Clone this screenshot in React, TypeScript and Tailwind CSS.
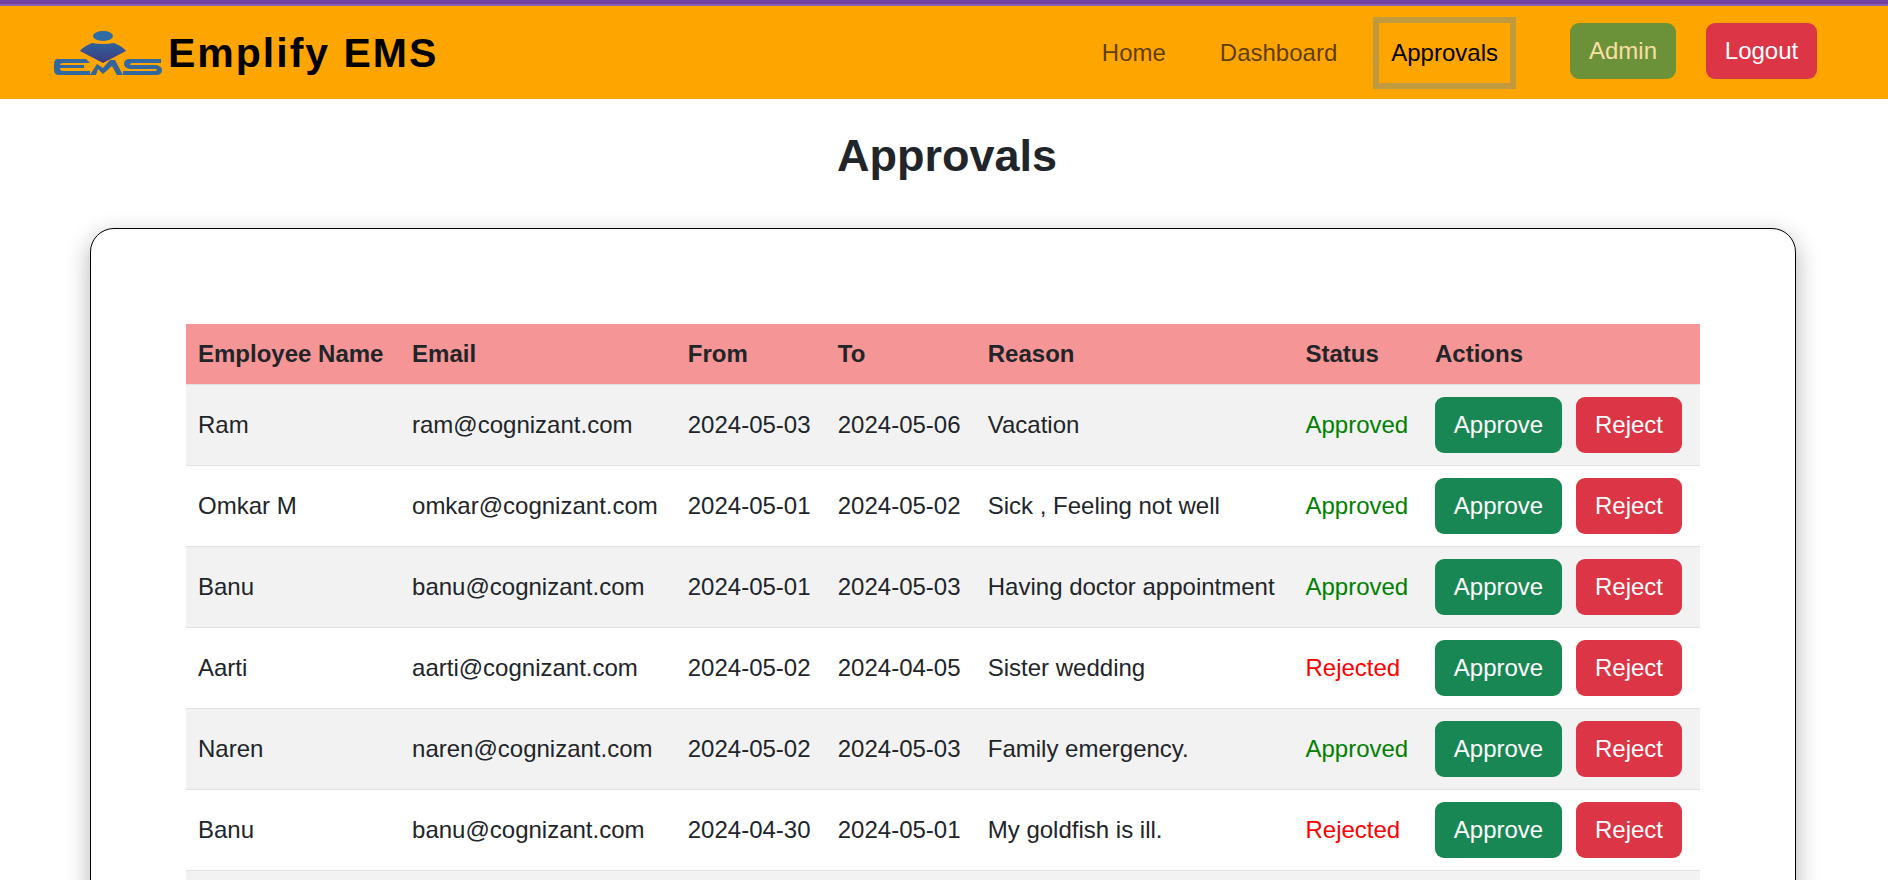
const ROWS = [
  { name: 'Ram', email: 'ram@cognizant.com', from: '2024-05-03', to: '2024-05-06', reason: 'Vacation', status: 'Approved' },
  { name: 'Omkar M', email: 'omkar@cognizant.com', from: '2024-05-01', to: '2024-05-02', reason: 'Sick , Feeling not well', status: 'Approved' },
  { name: 'Banu', email: 'banu@cognizant.com', from: '2024-05-01', to: '2024-05-03', reason: 'Having doctor appointment', status: 'Approved' },
  { name: 'Aarti', email: 'aarti@cognizant.com', from: '2024-05-02', to: '2024-04-05', reason: 'Sister wedding', status: 'Rejected' },
  { name: 'Naren', email: 'naren@cognizant.com', from: '2024-05-02', to: '2024-05-03', reason: 'Family emergency.', status: 'Approved' },
  { name: 'Banu', email: 'banu@cognizant.com', from: '2024-04-30', to: '2024-05-01', reason: 'My goldfish is ill.', status: 'Rejected' },
];

const HEADERS = ['Employee Name', 'Email', 'From', 'To', 'Reason', 'Status', 'Actions'];

function Logo() {
  return (
    <svg width="108" height="44" viewBox="0 0 108 44" className="shrink-0">
      <defs>
        <linearGradient id="logoBody" x1="0" y1="0" x2="0" y2="1">
          <stop offset="0" stopColor="#2f629c" />
          <stop offset="1" stopColor="#3f3a7e" />
        </linearGradient>
      </defs>
      <ellipse cx="49" cy="5" rx="10" ry="5" fill="#2f6ca4" />
      <path d="M38 12 Q49 14 60 12 Q68 15 72 20 L49 32 L26 20 Q30 15 38 12 Z" fill="url(#logoBody)" />
      {/* E */}
      <path d="M4 28 H32 L36 32 H9 Q6 32 6 34 H30 V37 H6 Q6 40 9 40 H36 V44 H5 Q0 44 0 39 V33 Q0 28 4 28 Z" fill="#33689f" />
      {/* M */}
      <path d="M36 44 L43 33 L49 37 L56 29 L61 29 L69 44 H63 L58 35 L49 43 L44 38 L42 44 Z" fill="#33649c" />
      {/* S */}
      <path d="M76 28 H107 V32 H78 Q76 32 76 34 H102 Q108 35 108 39 Q108 44 102 44 H69 V40 H101 Q103 40 103 38 H76 Q70 37 70 33 Q70 28 76 28 Z" fill="#33689f" />
    </svg>
  );
}

export default function App() {
  return (
    <div className="h-screen overflow-hidden bg-white text-[24px] leading-[36px] text-[#212529] font-['Liberation_Sans',Arial,sans-serif]">
      <div className="h-1 bg-[#6f42a1]" />
      <div className="h-0.5 bg-[#8c5fb0]" />
      <header className="h-[93px] bg-[#ffa500] flex items-center pl-[54px] pr-[71px]">
        <Logo />
        <span className="ml-[6px] mt-[2px] text-[41px] leading-none font-bold tracking-[2px] text-black">Emplify EMS</span>
        <nav className="ml-auto flex items-center">
          <a className="px-[18px] text-black/65">Home</a>
          <a className="ml-[18px] px-[18px] text-black/65">Dashboard</a>
          <a className="ml-[18px] border-[6px] border-[#c09a3e] px-3 py-3 text-black">Approvals</a>
          <button className="ml-[54px] mb-1 h-[56px] w-[106px] rounded-[9px] bg-[#6c9239] text-[#f9dfa6]">Admin</button>
          <button className="ml-[30px] mb-1 h-[56px] w-[111px] rounded-[9px] bg-[#dc3545] text-white">Logout</button>
        </nav>
      </header>
      <main>
        <h1 className="mt-[30px] pl-[6px] text-center text-[45px] leading-[54px] font-bold">Approvals</h1>
        <section className="ml-[90px] mr-[92px] mt-[45px] border border-black rounded-[24px] bg-white pt-[95px] px-[95px] shadow-[0_8px_24px_rgba(0,0,0,0.3)]">
          <table className="w-full border-collapse">
            <thead>
              <tr className="bg-[#f69595] border-b border-[#dee2e6] text-left">
                {HEADERS.map((h) => (
                  <th key={h} className="px-3 py-3 font-bold">{h}</th>
                ))}
              </tr>
            </thead>
            <tbody>
              {ROWS.map((r, i) => (
                <tr key={i} className={`border-b border-[#dee2e6] ${i % 2 === 0 ? 'bg-[#f2f2f2]' : 'bg-white'}`}>
                  <td className="p-3">{r.name}</td>
                  <td className="p-3">{r.email}</td>
                  <td className="p-3">{r.from}</td>
                  <td className="p-3">{r.to}</td>
                  <td className="p-3">{r.reason}</td>
                  <td className={`p-3 ${r.status === 'Approved' ? 'text-[#008000]' : 'text-[#ff0000]'}`}>{r.status}</td>
                  <td className="p-3 whitespace-nowrap">
                    <button className="h-[56px] w-[127px] rounded-[9px] bg-[#198754] text-white">Approve</button>
                    <button className="ml-[14px] h-[56px] w-[106px] rounded-[9px] bg-[#dc3545] text-white">Reject</button>
                  </td>
                </tr>
              ))}
              {/* next row is cut off by the window */}
              <tr className="bg-[#f2f2f2]">
                <td colSpan={7} className="h-[81px]" />
              </tr>
            </tbody>
          </table>
        </section>
      </main>
    </div>
  );
}
